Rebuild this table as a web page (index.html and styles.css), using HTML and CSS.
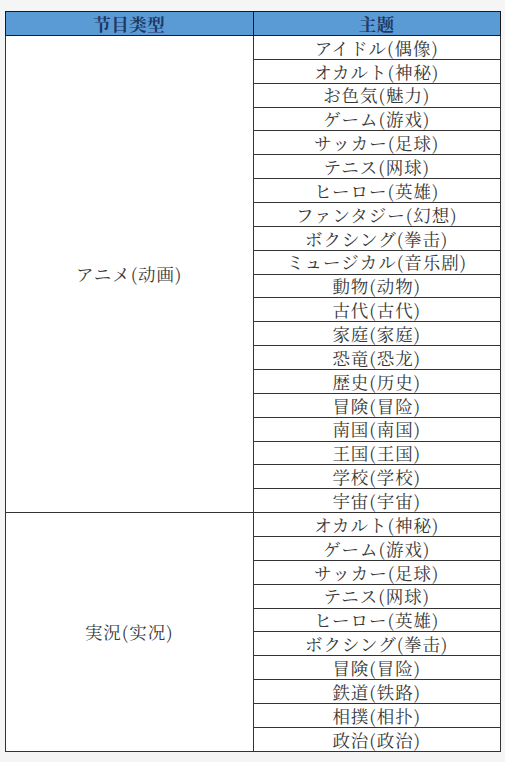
FILE: index.html
```html
<!DOCTYPE html>
<html lang="ja">
<head>
<meta charset="utf-8">
<title>节目类型</title>
<link rel="stylesheet" href="styles.css">
</head>
<body>
<div class="wrap">
<table class="grid">
  <thead>
    <tr><th>节目类型</th><th>主题</th></tr>
  </thead>
  <tbody>
    <tr><td class="type" rowspan="20">アニメ(动画)</td><td>アイドル(偶像)</td></tr>
    <tr><td>オカルト(神秘)</td></tr>
    <tr><td>お色気(魅力)</td></tr>
    <tr><td>ゲーム(游戏)</td></tr>
    <tr><td>サッカー(足球)</td></tr>
    <tr><td>テニス(网球)</td></tr>
    <tr><td>ヒーロー(英雄)</td></tr>
    <tr><td>ファンタジー(幻想)</td></tr>
    <tr><td>ボクシング(拳击)</td></tr>
    <tr><td>ミュージカル(音乐剧)</td></tr>
    <tr><td>動物(动物)</td></tr>
    <tr><td>古代(古代)</td></tr>
    <tr><td>家庭(家庭)</td></tr>
    <tr><td>恐竜(恐龙)</td></tr>
    <tr><td>歴史(历史)</td></tr>
    <tr><td>冒険(冒险)</td></tr>
    <tr><td>南国(南国)</td></tr>
    <tr><td>王国(王国)</td></tr>
    <tr><td>学校(学校)</td></tr>
    <tr><td>宇宙(宇宙)</td></tr>
    <tr><td class="type" rowspan="10">実況(实况)</td><td>オカルト(神秘)</td></tr>
    <tr><td>ゲーム(游戏)</td></tr>
    <tr><td>サッカー(足球)</td></tr>
    <tr><td>テニス(网球)</td></tr>
    <tr><td>ヒーロー(英雄)</td></tr>
    <tr><td>ボクシング(拳击)</td></tr>
    <tr><td>冒険(冒险)</td></tr>
    <tr><td>鉄道(铁路)</td></tr>
    <tr><td>相撲(相扑)</td></tr>
    <tr><td>政治(政治)</td></tr>
  </tbody>
</table>
</div>
</body>
</html>
```
FILE: styles.css
```css
html, body {
  margin: 0;
  padding: 0;
  background: #f5f5f5;
}
.wrap {
  padding: 11px 4px 0 5px;
}
.grid {
  border-collapse: collapse;
  width: 496px;
  table-layout: fixed;
  background: #ffffff;
  font-family: "Noto Serif CJK JP", "Noto Sans CJK JP", serif;
  font-size: 17.5px;
  color: #383838;
  border: 1px solid #1a1a1a;
}
.grid th {
  background: #5b9bd5;
  color: #1f3864;
  font-weight: bold;
  font-size: 17.5px;
  letter-spacing: 0.5px;
  height: 23px;
  padding: 0;
  line-height: 1;
  border: 1px solid #1a1a1a;
  width: 50%;
}
.grid tbody tr {
  height: 23.87px;
}
.grid td {
  padding: 0;
  line-height: 1;
  letter-spacing: 1px;
  text-align: center;
  border: 1px solid #333333;
  white-space: nowrap;
}
.grid td.type {
  vertical-align: middle;
}
```
